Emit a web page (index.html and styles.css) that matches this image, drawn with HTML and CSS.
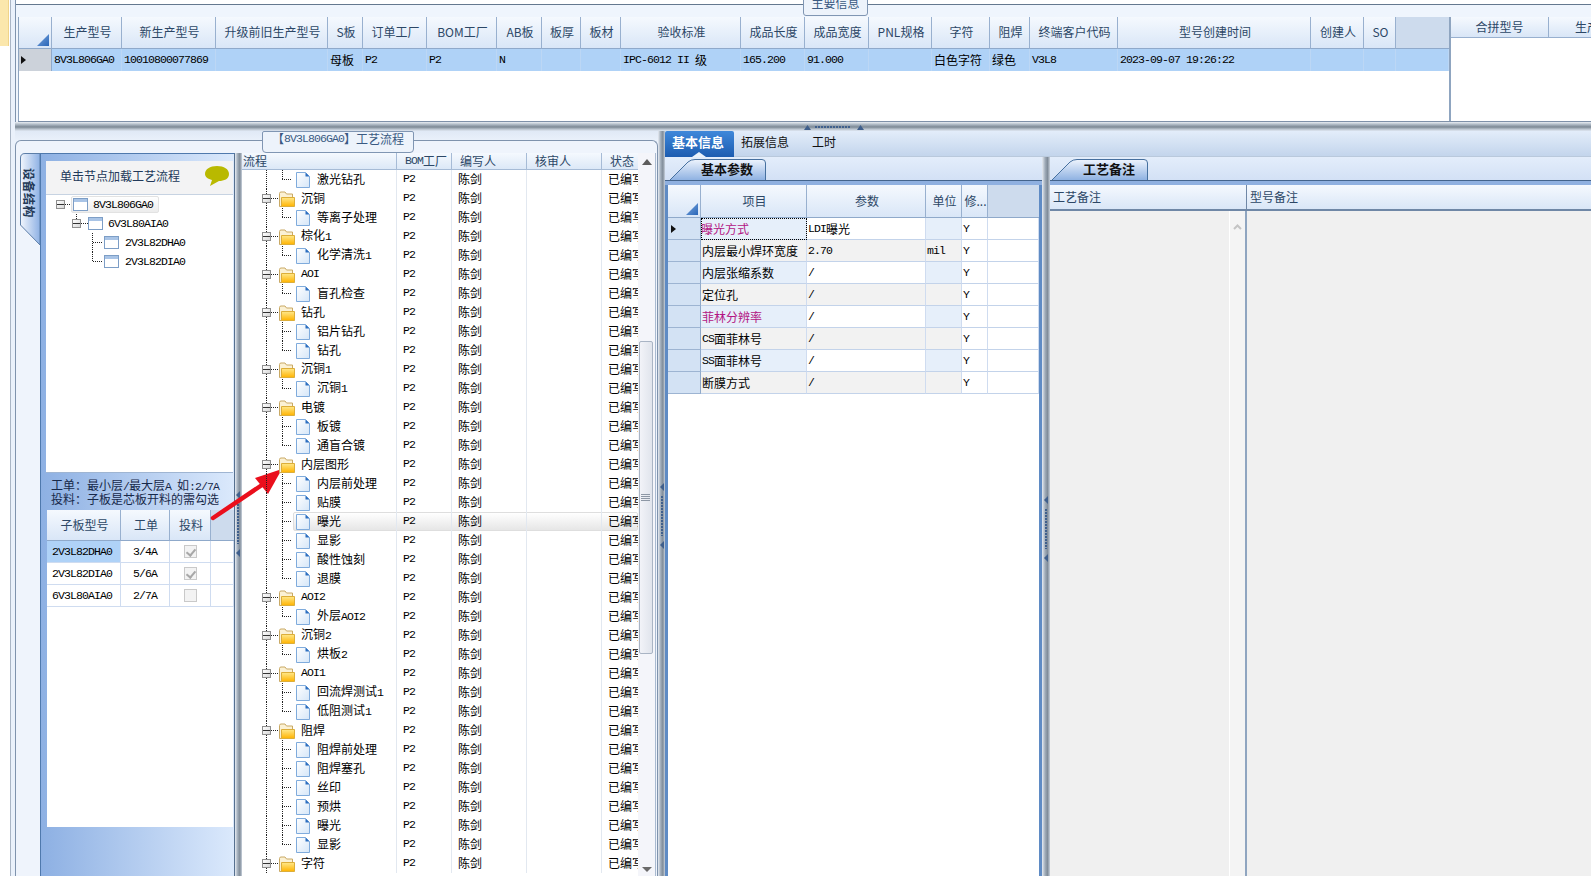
FILE: index.html
```html
<!DOCTYPE html>
<html lang="zh-CN">
<head>
<meta charset="utf-8">
<title>工艺流程</title>
<link rel="stylesheet" href="styles.css">
</head>
<body>
<svg class="defs" aria-hidden="true">
  <defs>
    <linearGradient id="fold" x1="0" y1="0" x2="0" y2="1"><stop offset="0" stop-color="#ffe88a"/><stop offset="1" stop-color="#ffb300"/></linearGradient>
    <linearGradient id="docg" x1="0" y1="0" x2="1" y2="1"><stop offset="0" stop-color="#ffffff"/><stop offset="1" stop-color="#d5e6f8"/></linearGradient>
    <linearGradient id="tabg" x1="0" y1="0" x2="0" y2="1"><stop offset="0" stop-color="#eef4fd"/><stop offset="1" stop-color="#8fb2e2"/></linearGradient>
    <symbol id="folder" viewBox="0 0 16 16"><path d="M.5 15.5V2.5Q.5 1 2 1H6L7.5 3H13.5V15.5Z" fill="#fbf1d4" stroke="#c9a964"/><path d="M2.5 15.5V6.5H15.5V15.5Z" fill="url(#fold)" stroke="#dcae3a"/></symbol>
    <symbol id="doc" viewBox="0 0 14 16"><path d="M.5.5H9.5L13.5 4.5V15.5H.5Z" fill="url(#docg)" stroke="#7fabdc"/><path d="M9.5.5V4.5H13.5Z" fill="#2d6fc0"/></symbol>
    <symbol id="node" viewBox="0 0 15 13"><rect x=".5" y=".5" width="14" height="12" fill="#fff" stroke="#7d9ec6"/><rect x="1" y="1" width="13" height="3" fill="#a9c4e6"/></symbol>
  </defs>
</svg>
<div class="app">
  <div class="gutter"><div class="gutter-tip"></div></div>
  <div class="shell">
    <section class="upper">
      <div class="legend top-legend">主要信息</div>
      <div class="upper-body">
        <div class="main-grid">
          <div class="gh top-cols">
            <div class="corner"><i class="tri"></i></div><div>生产型号</div><div>新生产型号</div><div>升级前旧生产型号</div><div>S板</div><div>订单工厂</div><div>BOM工厂</div><div>AB板</div><div>板厚</div><div>板材</div><div>验收标准</div><div>成品长度</div><div>成品宽度</div><div>PNL规格</div><div>字符</div><div>阻焊</div><div>终端客户代码</div><div>型号创建时间</div><div>创建人</div><div>SO</div><div class="fill"></div>
          </div>
          <div class="gr top-cols selrow">
            <div class="rowhead"><i class="ind"></i></div><div class="m">8V3L806GA0</div><div class="m">10010800077869</div><div></div><div>母板</div><div class="m">P2</div><div class="m">P2</div><div class="m">N</div><div></div><div></div><div><span class="m">IPC-6012 II </span>级</div><div class="m">165.200</div><div class="m">91.000</div><div></div><div>白色字符</div><div>绿色</div><div class="m">V3L8</div><div class="m">2023-09-07 19:26:22</div><div></div><div></div><div></div>
          </div>
        </div>
        <div class="merge">
          <div class="merge-head"><div class="mh1">合拼型号</div><div class="mh2">生产型号</div></div>
        </div>
      </div>
    </section>
    <div class="hsplit">
      <svg class="hgrip" width="60" height="6" viewBox="0 0 60 6"><path d="M0 6L3.500 1L7 6Z" fill="#3f5f8c"/><path d="M53 6L56.500 1L60 6Z" fill="#3f5f8c"/><path d="M11 3H47" stroke="#3f5f8c" stroke-width="2" stroke-dasharray="2 1"/></svg>
    </div>
    <div class="lower">
      <section class="group">
        <div class="legend flow-legend">【<span class="m">8V3L806GA0</span>】工艺流程</div>
        <div class="group-inner">
          <div class="sidetab">
            <svg class="sidetab-bg" width="20" height="93" viewBox="0 0 20 93"><defs><linearGradient id="sideg"><stop offset="0" stop-color="#f2f6fd"/><stop offset="1" stop-color="#8eb1e4"/></linearGradient></defs><path d="M20 .5H5Q.5 .5 .5 5V72L20 92Z" fill="url(#sideg)" stroke="#5c7ea8"/></svg>
            <span class="sidetab-text">设备结构</span>
          </div>
          <div class="panel">
            <div class="hint"><span>单击节点加载工艺流程</span>
              <svg class="bubble" width="24" height="21" viewBox="0 0 24 21"><path d="M12 0C19 0 24 3 24 8C24 13 19 15 14 15L5 20L7 14C3 13 0 11 0 8C0 3 5 0 12 0Z" fill="#b9b900"/></svg>
            </div>
            <div class="dtree">
              <div class="dn dn0"><i class="box"></i><span class="dn-sel"><svg class="ic-node"><use href="#node"/></svg><span class="m">8V3L806GA0</span></span></div>
              <div class="dn dn1"><i class="box"></i><svg class="ic-node"><use href="#node"/></svg><span class="m">6V3L80AIA0</span></div>
              <div class="dn dn2 dn-mid"><svg class="ic-node"><use href="#node"/></svg><span class="m">2V3L82DHA0</span></div>
              <div class="dn dn2"><svg class="ic-node"><use href="#node"/></svg><span class="m">2V3L82DIA0</span></div>
            </div>
            <div class="note"><p>工单&#65306;最小层<span class="m">/</span>最大层<span class="m">A </span>如<span class="m">:2/7A</span></p><p>投料&#65306;子板是芯板开料的需勾选</p></div>
            <div class="subgrid">
              <div class="gh sub-cols sub-head"><div>子板型号</div><div>工单</div><div>投料</div><div class="fill"></div></div>
              <div class="sr sub-cols"><div class="m sr-sel">2V3L82DHA0</div><div class="m ctr">3/4A</div><div class="ctr"><i class="chk on"></i></div><div></div></div>
              <div class="sr sub-cols"><div class="m">2V3L82DIA0</div><div class="m ctr">5/6A</div><div class="ctr"><i class="chk on"></i></div><div></div></div>
              <div class="sr sub-cols"><div class="m">6V3L80AIA0</div><div class="m ctr">2/7A</div><div class="ctr"><i class="chk"></i></div><div></div></div>
            </div>
          </div>
          <div class="vgrip vgrip-a"><svg class="grip" width="6" height="66" viewBox="0 0 6 66"><path d="M5 0V8L1 4Z" fill="#3f5f8c"/><path d="M5 58V66L1 62Z" fill="#3f5f8c"/><path d="M3 13V53" stroke="#3f5f8c" stroke-width="2" stroke-dasharray="2 1"/></svg></div>
          <div class="flowgrid">
            <div class="flowcols">
              <div class="fh flow-cols"><div class="fh-l">流程</div><div><span class="m">BOM</span>工厂</div><div>编写人</div><div>核审人</div><div>状态</div></div>
              <div class="frows">
                <div class="tr flow-cols"><div class="tc leaf"><svg class="ic-doc"><use href="#doc"/></svg><span>激光钻孔</span></div><div class="m">P2</div><div>陈剑</div><div></div><div class="st">已编写</div></div>
                <div class="tr flow-cols"><div class="tc fold"><i class="box"></i><svg class="ic-fold"><use href="#folder"/></svg><span>沉铜</span></div><div class="m">P2</div><div>陈剑</div><div></div><div class="st">已编写</div></div>
                <div class="tr flow-cols"><div class="tc leaf"><svg class="ic-doc"><use href="#doc"/></svg><span>等离子处理</span></div><div class="m">P2</div><div>陈剑</div><div></div><div class="st">已编写</div></div>
                <div class="tr flow-cols"><div class="tc fold"><i class="box"></i><svg class="ic-fold"><use href="#folder"/></svg><span>棕化<span class="m">1</span></span></div><div class="m">P2</div><div>陈剑</div><div></div><div class="st">已编写</div></div>
                <div class="tr flow-cols"><div class="tc leaf"><svg class="ic-doc"><use href="#doc"/></svg><span>化学清洗<span class="m">1</span></span></div><div class="m">P2</div><div>陈剑</div><div></div><div class="st">已编写</div></div>
                <div class="tr flow-cols"><div class="tc fold"><i class="box"></i><svg class="ic-fold"><use href="#folder"/></svg><span class="m">AOI</span></div><div class="m">P2</div><div>陈剑</div><div></div><div class="st">已编写</div></div>
                <div class="tr flow-cols"><div class="tc leaf"><svg class="ic-doc"><use href="#doc"/></svg><span>盲孔检查</span></div><div class="m">P2</div><div>陈剑</div><div></div><div class="st">已编写</div></div>
                <div class="tr flow-cols"><div class="tc fold"><i class="box"></i><svg class="ic-fold"><use href="#folder"/></svg><span>钻孔</span></div><div class="m">P2</div><div>陈剑</div><div></div><div class="st">已编写</div></div>
                <div class="tr flow-cols"><div class="tc leaf mid"><svg class="ic-doc"><use href="#doc"/></svg><span>铝片钻孔</span></div><div class="m">P2</div><div>陈剑</div><div></div><div class="st">已编写</div></div>
                <div class="tr flow-cols"><div class="tc leaf"><svg class="ic-doc"><use href="#doc"/></svg><span>钻孔</span></div><div class="m">P2</div><div>陈剑</div><div></div><div class="st">已编写</div></div>
                <div class="tr flow-cols"><div class="tc fold"><i class="box"></i><svg class="ic-fold"><use href="#folder"/></svg><span>沉铜<span class="m">1</span></span></div><div class="m">P2</div><div>陈剑</div><div></div><div class="st">已编写</div></div>
                <div class="tr flow-cols"><div class="tc leaf"><svg class="ic-doc"><use href="#doc"/></svg><span>沉铜<span class="m">1</span></span></div><div class="m">P2</div><div>陈剑</div><div></div><div class="st">已编写</div></div>
                <div class="tr flow-cols"><div class="tc fold"><i class="box"></i><svg class="ic-fold"><use href="#folder"/></svg><span>电镀</span></div><div class="m">P2</div><div>陈剑</div><div></div><div class="st">已编写</div></div>
                <div class="tr flow-cols"><div class="tc leaf mid"><svg class="ic-doc"><use href="#doc"/></svg><span>板镀</span></div><div class="m">P2</div><div>陈剑</div><div></div><div class="st">已编写</div></div>
                <div class="tr flow-cols"><div class="tc leaf"><svg class="ic-doc"><use href="#doc"/></svg><span>通盲合镀</span></div><div class="m">P2</div><div>陈剑</div><div></div><div class="st">已编写</div></div>
                <div class="tr flow-cols"><div class="tc fold"><i class="box"></i><svg class="ic-fold"><use href="#folder"/></svg><span>内层图形</span></div><div class="m">P2</div><div>陈剑</div><div></div><div class="st">已编写</div></div>
                <div class="tr flow-cols"><div class="tc leaf mid"><svg class="ic-doc"><use href="#doc"/></svg><span>内层前处理</span></div><div class="m">P2</div><div>陈剑</div><div></div><div class="st">已编写</div></div>
                <div class="tr flow-cols"><div class="tc leaf mid"><svg class="ic-doc"><use href="#doc"/></svg><span>贴膜</span></div><div class="m">P2</div><div>陈剑</div><div></div><div class="st">已编写</div></div>
                <div class="tr flow-cols tr-sel"><div class="tc leaf mid"><svg class="ic-doc"><use href="#doc"/></svg><span>曝光</span></div><div class="m">P2</div><div>陈剑</div><div></div><div class="st">已编写</div></div>
                <div class="tr flow-cols"><div class="tc leaf mid"><svg class="ic-doc"><use href="#doc"/></svg><span>显影</span></div><div class="m">P2</div><div>陈剑</div><div></div><div class="st">已编写</div></div>
                <div class="tr flow-cols"><div class="tc leaf mid"><svg class="ic-doc"><use href="#doc"/></svg><span>酸性蚀刻</span></div><div class="m">P2</div><div>陈剑</div><div></div><div class="st">已编写</div></div>
                <div class="tr flow-cols"><div class="tc leaf"><svg class="ic-doc"><use href="#doc"/></svg><span>退膜</span></div><div class="m">P2</div><div>陈剑</div><div></div><div class="st">已编写</div></div>
                <div class="tr flow-cols"><div class="tc fold"><i class="box"></i><svg class="ic-fold"><use href="#folder"/></svg><span class="m">AOI2</span></div><div class="m">P2</div><div>陈剑</div><div></div><div class="st">已编写</div></div>
                <div class="tr flow-cols"><div class="tc leaf"><svg class="ic-doc"><use href="#doc"/></svg><span>外层<span class="m">AOI2</span></span></div><div class="m">P2</div><div>陈剑</div><div></div><div class="st">已编写</div></div>
                <div class="tr flow-cols"><div class="tc fold"><i class="box"></i><svg class="ic-fold"><use href="#folder"/></svg><span>沉铜<span class="m">2</span></span></div><div class="m">P2</div><div>陈剑</div><div></div><div class="st">已编写</div></div>
                <div class="tr flow-cols"><div class="tc leaf"><svg class="ic-doc"><use href="#doc"/></svg><span>烘板<span class="m">2</span></span></div><div class="m">P2</div><div>陈剑</div><div></div><div class="st">已编写</div></div>
                <div class="tr flow-cols"><div class="tc fold"><i class="box"></i><svg class="ic-fold"><use href="#folder"/></svg><span class="m">AOI1</span></div><div class="m">P2</div><div>陈剑</div><div></div><div class="st">已编写</div></div>
                <div class="tr flow-cols"><div class="tc leaf mid"><svg class="ic-doc"><use href="#doc"/></svg><span>回流焊测试<span class="m">1</span></span></div><div class="m">P2</div><div>陈剑</div><div></div><div class="st">已编写</div></div>
                <div class="tr flow-cols"><div class="tc leaf"><svg class="ic-doc"><use href="#doc"/></svg><span>低阻测试<span class="m">1</span></span></div><div class="m">P2</div><div>陈剑</div><div></div><div class="st">已编写</div></div>
                <div class="tr flow-cols"><div class="tc fold"><i class="box"></i><svg class="ic-fold"><use href="#folder"/></svg><span>阻焊</span></div><div class="m">P2</div><div>陈剑</div><div></div><div class="st">已编写</div></div>
                <div class="tr flow-cols"><div class="tc leaf mid"><svg class="ic-doc"><use href="#doc"/></svg><span>阻焊前处理</span></div><div class="m">P2</div><div>陈剑</div><div></div><div class="st">已编写</div></div>
                <div class="tr flow-cols"><div class="tc leaf mid"><svg class="ic-doc"><use href="#doc"/></svg><span>阻焊塞孔</span></div><div class="m">P2</div><div>陈剑</div><div></div><div class="st">已编写</div></div>
                <div class="tr flow-cols"><div class="tc leaf mid"><svg class="ic-doc"><use href="#doc"/></svg><span>丝印</span></div><div class="m">P2</div><div>陈剑</div><div></div><div class="st">已编写</div></div>
                <div class="tr flow-cols"><div class="tc leaf mid"><svg class="ic-doc"><use href="#doc"/></svg><span>预烘</span></div><div class="m">P2</div><div>陈剑</div><div></div><div class="st">已编写</div></div>
                <div class="tr flow-cols"><div class="tc leaf mid"><svg class="ic-doc"><use href="#doc"/></svg><span>曝光</span></div><div class="m">P2</div><div>陈剑</div><div></div><div class="st">已编写</div></div>
                <div class="tr flow-cols"><div class="tc leaf"><svg class="ic-doc"><use href="#doc"/></svg><span>显影</span></div><div class="m">P2</div><div>陈剑</div><div></div><div class="st">已编写</div></div>
                <div class="tr flow-cols"><div class="tc fold"><i class="box"></i><svg class="ic-fold"><use href="#folder"/></svg><span>字符</span></div><div class="m">P2</div><div>陈剑</div><div></div><div class="st">已编写</div></div>
              </div>
            </div>
            <div class="vscroll">
              <i class="arr-up"></i>
              <div class="thumb"><i class="thumb-grip"></i></div>
              <i class="arr-down"></i>
            </div>
          </div>
        </div>
      </section>
      <div class="vgrip vgrip-b"><svg class="grip" width="6" height="66" viewBox="0 0 6 66"><path d="M5 0V8L1 4Z" fill="#3f5f8c"/><path d="M5 58V66L1 62Z" fill="#3f5f8c"/><path d="M3 13V53" stroke="#3f5f8c" stroke-width="2" stroke-dasharray="2 1"/></svg></div>
      <section class="detail">
        <nav class="tabs">
          <div class="tab tab-on">基本信息</div>
          <div class="tab">拓展信息</div>
          <div class="tab tab-short">工时</div>
        </nav>
        <div class="panes">
          <div class="pane pane-l">
            <div class="pane-tabs">
              <div class="ptab ptab-l"><svg class="ptab-bg" viewBox="0 0 96 21" preserveAspectRatio="none"><path d="M0 21L18 3Q21 .5 25 .5H92Q95.500 .5 95.500 4V21" fill="url(#tabg)" stroke="#46709f"/></svg><span>基本参数</span></div>
            </div>
            <div class="pane-strip"></div>
            <div class="pgrid">
              <div class="gh d-cols d-head"><div class="corner"><i class="tri"></i></div><div>项目</div><div>参数</div><div>单位</div><div>修...</div><div class="fill"></div></div>
              <div class="dr d-cols odd"><div class="rowhead"><i class="ind"></i></div><div class="focus pink">曝光方式</div><div><span class="m">LDI</span>曝光</div><div></div><div class="m">Y</div><div></div></div>
              <div class="dr d-cols"><div class="rowhead"></div><div>内层最小焊环宽度</div><div class="m">2.70</div><div class="m">mil</div><div class="m">Y</div><div></div></div>
              <div class="dr d-cols odd"><div class="rowhead"></div><div>内层张缩系数</div><div class="m">/</div><div></div><div class="m">Y</div><div></div></div>
              <div class="dr d-cols"><div class="rowhead"></div><div>定位孔</div><div class="m">/</div><div></div><div class="m">Y</div><div></div></div>
              <div class="dr d-cols odd"><div class="rowhead"></div><div class="pink">菲林分辨率</div><div class="m">/</div><div></div><div class="m">Y</div><div></div></div>
              <div class="dr d-cols"><div class="rowhead"></div><div><span class="m">CS</span>面菲林号</div><div class="m">/</div><div></div><div class="m">Y</div><div></div></div>
              <div class="dr d-cols odd"><div class="rowhead"></div><div><span class="m">SS</span>面菲林号</div><div class="m">/</div><div></div><div class="m">Y</div><div></div></div>
              <div class="dr d-cols"><div class="rowhead"></div><div>断膜方式</div><div class="m">/</div><div></div><div class="m">Y</div><div></div></div>
            </div>
          </div>
          <div class="vgrip vgrip-c"><svg class="grip" width="6" height="66" viewBox="0 0 6 66"><path d="M5 0V8L1 4Z" fill="#3f5f8c"/><path d="M5 58V66L1 62Z" fill="#3f5f8c"/><path d="M3 13V53" stroke="#3f5f8c" stroke-width="2" stroke-dasharray="2 1"/></svg></div>
          <div class="pane pane-r">
            <div class="pane-tabs">
              <div class="ptab ptab-r"><svg class="ptab-bg" viewBox="0 0 96 21" preserveAspectRatio="none"><path d="M0 21L18 3Q21 .5 25 .5H92Q95.500 .5 95.500 4V21" fill="url(#tabg)" stroke="#46709f"/></svg><span>工艺备注</span></div>
            </div>
            <div class="pane-strip"></div>
            <div class="memo-head"><div class="memo-a">工艺备注</div><div>型号备注</div></div>
            <div class="memo-body">
              <div class="memo-a memo-cell"><div class="memo-scroll"><svg width="9" height="6" viewBox="0 0 9 6"><path d="M1 5L4.500 1.500L8 5" fill="none" stroke="#c4c4c4" stroke-width="2"/></svg></div></div>
              <div class="memo-cell"></div>
            </div>
          </div>
        </div>
      </section>
    </div>
  </div>
</div>
<svg class="redarrow" width="80" height="60" viewBox="0 0 80 60" aria-hidden="true"><path d="M3 50L52 17" stroke="#ea0f1c" stroke-width="4.500" stroke-linecap="round"/><path d="M72 1L45 10L58 26Z" fill="#ea0f1c"/></svg>
</body>
</html>
```

FILE: styles.css
```css
* { box-sizing: border-box; }
html, body { margin: 0; padding: 0; }
body {
  width: 1591px;
  height: 876px;
  overflow: hidden;
  position: relative;
  background: #fff;
  color: #000;
  font-family: "Noto Sans CJK SC", "Noto Sans", sans-serif;
  font-size: 12px;
  line-height: 1;
  text-spacing-trim: space-all;
  text-autospace: no-autospace;
  --vd: repeating-linear-gradient(180deg, #222 0 1px, transparent 1px 2px);
  --hd: repeating-linear-gradient(90deg, #222 0 1px, transparent 1px 2px);
}
i { display: block; font-style: normal; }
p { margin: 0; height: 14px; white-space: pre; }
.defs { position: absolute; width: 0; height: 0; }
.m { font-family: "Liberation Mono", monospace; font-size: 11.5px; letter-spacing: -.9px; }
.app { display: flex; height: 876px; }
.gutter { width: 10px; flex: none; }
.gutter-tip { width: 9px; height: 46px; background: #fbe7ac; border-right: 1px solid #f0d48a; }
.shell {
  width: 1581px;
  border-left: 1px solid #a9b5c5;
  padding-left: 4px;
  background: #eaf1fb;
  display: flex;
  flex-direction: column;
}

/* upper band */
.upper {
  height: 122px;
  flex: none;
  padding-top: 17px;
  position: relative;
  border-left: 1px solid #7f93ad;
  background: linear-gradient(#fff 0 4px, #64788f 4px 5px, #eff5fd 5px);
}
.legend {
  position: absolute;
  background: #edf3fb;
  border: 1px solid #8096b3;
  color: #3a5a82;
  display: flex;
  align-items: center;
  justify-content: center;
  white-space: nowrap;
  padding-bottom: 4px;
}
.top-legend { left: 787px; top: -6px; width: 65px; height: 22px; border-radius: 0 0 3px 3px; }
.upper-body { display: flex; height: 105px; margin-left: 2px; border-bottom: 1px solid #7e90a8; }
.main-grid { width: 1431px; flex: none; background: #fff; border-left: 1px solid #8da4c0; }
.merge { flex: 1; min-width: 0; background: #fff; border-left: 2px solid #8fa5c0; overflow: hidden; }
.merge-head { display: flex; height: 21px; }
.mh1, .mh2 {
  flex: none;
  display: flex; align-items: center; justify-content: center;
  background: linear-gradient(#f5f9fe, #d9e6f7);
  border-bottom: 1px solid #98b0cf;
  color: #2c4766;
}
.mh1 { width: 98px; border-right: 1px solid #98b0cf; }
.mh2 { width: 100px; }

.top-cols {
  display: grid;
  grid-template-columns: 33px 70px 94px 112px 35px 64px 70px 45px 39px 40px 120px 64px 64px 63px 58px 40px 88px 193px 53px 32px 53px;
}
.gh > div {
  display: flex; align-items: center; justify-content: center;
  padding-left: 2px;
  background: linear-gradient(#f5f9fe, #d9e6f7);
  border-right: 1px solid #98b0cf;
  border-bottom: 1px solid #8fa9ca;
  color: #2c4766;
  white-space: nowrap;
  overflow: hidden;
}
.gh > .fill { background: #cddbed; border-right: 0; }
.gh > .corner { position: relative; }
.top-cols.gh { height: 32px; }
.top-cols.gh > div { padding-bottom: 1px; }
.tri {
  position: absolute;
  right: 2px; bottom: 2px;
  width: 12px; height: 12px;
  background: linear-gradient(135deg, #7ba7de, #2a66b8);
  clip-path: polygon(100% 0, 100% 100%, 0 100%);
}
.gr { height: 22px; }
.gr > div {
  display: flex; align-items: center;
  padding-left: 2px;
  white-space: pre;
  overflow: hidden;
  border-right: 1px solid #bcd7f5;
}
.selrow { background: #afd2f7; }
.rowhead { background: #d3dde9; position: relative; border-right: 1px solid #8fa9ca !important; }
.selrow .rowhead { background: #ccd2da; }
.ind { width: 0; height: 0; border-left: 5px solid #111; border-top: 4px solid transparent; border-bottom: 4px solid transparent; }

/* splitter */
.hsplit {
  height: 9px;
  flex: none;
  position: relative;
  background: linear-gradient(#e8edf3, #a2aeba 3px, #7c8894 5px, #b5bfca 7px, #dfe7f2);
}
.hgrip { position: absolute; left: 789px; top: 2px; }

/* lower */
.lower { height: 745px; display: flex; background: linear-gradient(#e0e9f6 0, #eaf1fb 10px); }
.group {
  width: 643px;
  flex: none;
  margin-top: 9px;
  height: 736px;
  border: 1px solid #7f93ad;
  border-bottom: 0;
  border-radius: 6px 6px 0 0;
  background: #eff4fc;
  padding: 12px 0 0 4px;
  position: relative;
}
.flow-legend { left: 246px; top: -10px; width: 152px; height: 22px; border-radius: 2px 2px 4px 4px; padding-bottom: 7px; }
.group-inner { display: flex; height: 724px; }
.sidetab { width: 20px; height: 93px; flex: none; position: relative; }
.sidetab-bg { position: absolute; left: 0; top: 0; }
.sidetab-text {
  position: absolute; left: 3px; top: 15px;
  writing-mode: vertical-rl;
  text-orientation: sideways;
  letter-spacing: .5px;
  font-weight: 700;
  color: #243a58;
}
.panel {
  width: 195px;
  flex: none;
  padding: 7px 1px 0 5px;
  background: linear-gradient(90deg, #8db0e3, #dbe9fc);
  border-left: 1px solid #4f79ad;
  border-top: 1px solid #4f79ad;
  border-right: 1px solid #56708f;
}
.hint {
  height: 34px;
  background: #f3f3f4;
  display: flex; align-items: center; justify-content: space-between;
  padding: 0 4px 3px 14px;
  color: #22395a;
  border-bottom: 1px solid #c7d3e2;
}
.bubble { margin-top: 1px; }
.dtree { height: 278px; background: #fff; border-bottom: 1px solid #9fb5d2; }
.dn { height: 19px; display: flex; align-items: center; white-space: nowrap; background-repeat: no-repeat; }
.box {
  width: 9px; height: 9px; flex: none;
  border: 1px solid #8f8f8f;
  background: linear-gradient(180deg, transparent 3px, #333 3px 4px, transparent 4px), linear-gradient(135deg, #fff, #d8d8d8);
}
.ic-node { width: 15px; height: 13px; flex: none; }
.ic-doc { width: 14px; height: 16px; flex: none; }
.ic-fold { width: 16px; height: 16px; flex: none; }
.dn0 { padding-left: 10px; background-image: var(--hd); background-size: 7px 1px; background-position: 19px 50%; }
.dn-sel {
  display: flex; align-items: center;
  margin-left: 6px;
  width: 88px; height: 17px;
  padding-left: 1px;
  background: linear-gradient(#fff, #ececec);
  border: 1px solid #e2e2e2;
  border-radius: 2px;
}
.dn-sel .m { margin-left: 5px; }
.dn1 {
  padding-left: 26px;
  background-image: var(--vd), var(--hd);
  background-size: 1px 10px, 7px 1px;
  background-position: 30px 0, 35px 50%;
}
.dn1 .ic-node { margin-left: 7px; }
.dn1 .m { margin-left: 5px; }
.dn2 {
  padding-left: 58px;
  background-image: var(--vd), var(--hd);
  background-size: 1px 10px, 9px 1px;
  background-position: 46px 0, 47px 50%;
}
.dn-mid { background-size: 1px 19px, 9px 1px; }
.dn2 .m { margin-left: 6px; }
.note { height: 37px; padding: 6px 0 0 5px; color: #17294a; overflow: hidden; }
.subgrid { height: 317px; margin-left: 1px; background: #fff; }
.sub-cols { display: grid; grid-template-columns: 74px 49px 41px 23px; }
.sub-head { height: 31px; }
.sr { height: 22px; }
.sr > div {
  display: flex; align-items: center; padding-left: 5px;
  border-right: 1px solid #cfdcf0;
  border-bottom: 1px solid #cfdcf0;
}
.sr > .ctr { justify-content: center; padding-left: 0; }
.sr > .sr-sel { background: #afd2f7; }
.chk {
  width: 13px; height: 13px;
  border: 1px solid #c9c9c9;
  background: #f3f3f3;
  position: relative;
}
.chk.on::after {
  content: "";
  position: absolute; left: 3px; top: 1px;
  width: 4px; height: 7px;
  border: solid #a8a8a8;
  border-width: 0 2px 2px 0;
  transform: rotate(40deg);
}
.vgrip {
  flex: none;
  position: relative;
  background: linear-gradient(90deg, #e7ecf3, #9eaab7 40%, #808c99 70%, #c8d1dc);
}
.vgrip-a { width: 7px; height: 724px; }
.grip { position: absolute; left: 0; }
.vgrip-a .grip { top: 338px; }
.vgrip-b { width: 7px; height: 745px; }
.vgrip-b .grip { left: 1px; top: 352px; }
.vgrip-c { width: 8px; height: 719px; }
.vgrip-c .grip { left: 1px; top: 339px; }

/* process grid */
.flowgrid { width: 414px; flex: none; display: flex; background: #fff; border-right: 1px solid #a9bad0; overflow: hidden; }
.flowcols { width: 396px; flex: none; }
.flow-cols { display: grid; grid-template-columns: 155px 55px 75px 75px 36px; }
.fh { height: 17px; }
.fh > div {
  display: flex; align-items: center; justify-content: flex-start;
  padding-left: 8px;
  background: linear-gradient(#f5f9fe, #dce8f7);
  border-right: 1px solid #a6bbd6;
  border-bottom: 1px solid #a6bbd6;
  color: #2c4766;
  white-space: nowrap;
}
.fh > .fh-l { padding-left: 1px; }
.fh > div:last-child { border-right: 0; }
.frows { height: 707px; overflow: hidden; }
.tr { height: 19px; position: relative; }
.tr > div {
  position: relative;
  z-index: 1;
  display: flex; align-items: center;
  padding-left: 6px;
  padding-bottom: 1px;
  white-space: nowrap;
  overflow: hidden;
  border-right: 1px solid #e2e8f0;
}
.tr > .st { padding-left: 6px; border-right: 0; }
.tr > .tc {
  padding-left: 0;
  padding-bottom: 0;
  background-repeat: no-repeat;
}
.tc span { position: relative; top: -1px; }
.tc span span { top: 0; }
.fold {
  background-image: var(--vd), var(--hd);
  background-size: 1px 100%, 8px 1px;
  background-position: 24px 0, 29px 50%;
}
.fold .box { margin-left: 20px; }
.fold .ic-fold { margin-left: 8px; }
.fold span { margin-left: 6px; }
.leaf {
  background-image: var(--vd), var(--vd), var(--hd);
  background-size: 1px 100%, 1px 10px, 10px 1px;
  background-position: 24px 0, 40px 0, 40px 50%;
}
.leaf.mid { background-size: 1px 100%, 1px 100%, 10px 1px; }
.leaf .ic-doc { margin-left: 54px; }
.leaf span { margin-left: 7px; }
.tc span span { margin-left: 0; }
.tr-sel::before {
  content: "";
  position: absolute;
  left: 51px; right: 0; top: 0; bottom: 0;
  background: linear-gradient(#fff, #e6e6e6);
  border: 1px solid #dedede;
  border-radius: 2px;
}
.vscroll { width: 17px; flex: none; background: #f4f5fa; display: flex; flex-direction: column; align-items: center; }
.arr-up { width: 0; height: 0; margin-top: 6px; border: 5px solid transparent; border-top: 0; border-bottom: 6px solid #5c5c5c; }
.thumb {
  width: 14px; height: 313px;
  margin-top: 176px;
  margin-left: -2px;
  background: linear-gradient(90deg, #f2f3f8, #e0e4ec);
  border: 1px solid #a9b4c4;
  border-radius: 2px;
  display: flex; align-items: center; justify-content: center;
}
.thumb-grip {
  width: 9px; height: 8px;
  background: repeating-linear-gradient(#8d97a5 0 1px, transparent 1px 2px);
}
.arr-down { width: 0; height: 0; margin-top: 213px; border: 5px solid transparent; border-bottom: 0; border-top: 5px solid #6a6a6a; }

/* detail side */
.detail { flex: 1; min-width: 0; display: flex; flex-direction: column; }
.tabs {
  height: 26px; flex: none;
  display: flex;
  background: linear-gradient(#e3edfa, #c3d5ec);
  border-bottom: 1px solid #b9c9dc;
}
.tab { width: 56px; display: flex; align-items: center; justify-content: center; color: #111; padding-bottom: 4px; }
.tab-short { width: 46px; margin-left: 8px; }
.tab-on {
  width: 69px;
  background: linear-gradient(#3f88da, #1c5cb0);
  color: #fff;
  font-weight: 700;
  font-size: 13px;
  height: 26px;
  padding: 0 3px 6px 0;
  position: relative;
  border-radius: 2px 2px 0 0;
  margin-right: 3px;
}
.tab-on::after {
  content: "";
  position: absolute;
  left: 27px; bottom: 0;
  border: 7px solid transparent;
  border-top: 0;
  border-bottom: 5px solid #eaf2fb;
}
.panes { display: flex; height: 719px; }
.pane { display: flex; flex-direction: column; background: #fff; }
.pane-l { width: 377px; flex: none; }
.pane-r { flex: 1; min-width: 0; background: #f0f0f0; }
.pane-tabs {
  height: 23px; flex: none;
  padding-top: 2px;
  background: linear-gradient(#e3edfb, #d3e1f5);
}
.ptab { height: 21px; width: 96px; position: relative; display: flex; align-items: center; justify-content: flex-end; font-weight: 700; font-size: 13px; color: #111; padding-bottom: 3px; }
.ptab span { position: relative; padding-right: 13px; }
.ptab-bg { position: absolute; left: 0; top: 0; width: 100%; height: 100%; }
.ptab-l { margin-left: 5px; }
.ptab-r { margin-left: 2px; }
.pane-strip { height: 5px; flex: none; background: #8fb0e0; border-top: 1px solid #44648c; }
.pgrid {
  flex: 1;
  border-left: 3px solid #5f8bc4;
  border-right: 3px solid #5f8bc4;
  background: #fff;
}
.d-cols { display: grid; grid-template-columns: 33px 106px 119px 36px 26px 51px; }
.d-head { height: 33px; }
.dr { height: 22px; }
.dr > div {
  display: flex; align-items: center;
  padding-left: 1px;
  background: #f2f2f2;
  border-right: 1px solid #cfdcf0;
  border-bottom: 1px solid #c3d3ea;
  white-space: nowrap;
  overflow: hidden;
}
.dr > div:nth-child(5), .dr > div:nth-child(6) { background: #fff; }
.dr.odd > div { background: #fff; }
.dr.odd > div:nth-child(2), .dr.odd > div:nth-child(4) { background: #e6effa; }
.dr > .rowhead, .dr.odd > .rowhead { background: #d3e2f4; border-right: 1px solid #8fa9ca; border-bottom: 1px solid #9db4d2; padding-left: 3px; }
.dr > .focus, .dr.odd > .focus { outline: 1px dotted #000; outline-offset: -1px; padding-left: 0; }
.pink { color: #b31583; }
.memo-head {
  height: 26px; flex: none;
  display: flex;
  background: linear-gradient(#f5f9fe, #d9e6f7);
  border-bottom: 2px solid #6f87a6;
  color: #2c4766;
}
.memo-head > div { display: flex; align-items: center; padding-left: 3px; }
.memo-a { width: 197px; flex: none; border-right: 1px solid #6f87a6; }
.memo-body { flex: 1; display: flex; background: #f0f0f0; }
.memo-a.memo-cell { border-right: 2px solid #8fa5c0; display: flex; justify-content: flex-end; }
.memo-scroll { width: 16px; border-left: 1px solid #fff; padding: 8px 0 0 3px; background: #f4f4f4; }

/* annotation arrow drawn over the screenshot */
.redarrow { position: absolute; left: 210px; top: 468px; }
```
